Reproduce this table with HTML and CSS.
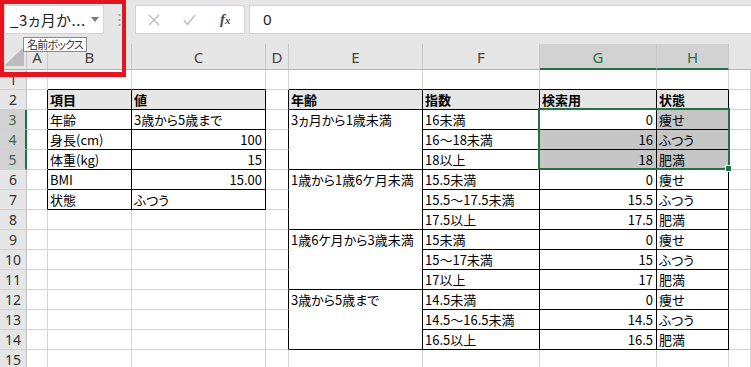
FILE: index.html
```html
<!DOCTYPE html>
<html lang="ja">
<head>
<meta charset="utf-8">
<title>Excel</title>
<link rel="stylesheet" href="styles.css">
</head>
<body>
<div class="fbar">
  <div class="namebox">
    <span class="nb-text">_3ヵ月か...</span>
    <svg class="caret" width="8" height="5" viewBox="0 0 8 5"><path d="M0 0H8L4 5Z" fill="#7a7a7a"/></svg>
  </div>
  <div class="grip">
    <svg width="3" height="12" viewBox="0 0 3 12"><rect x="0.5" y="0" width="2" height="2" fill="#a6a6a6"/><rect x="0.5" y="5" width="2" height="2" fill="#a6a6a6"/><rect x="0.5" y="10" width="2" height="2" fill="#a6a6a6"/></svg>
  </div>
  <div class="fxbox">
    <svg class="ico-x" width="12" height="12" viewBox="0 0 12 12"><path d="M1 1L11 11M11 1L1 11" stroke="#bdbdbd" stroke-width="1.4" fill="none"/></svg>
    <svg class="ico-ok" width="13" height="12" viewBox="0 0 13 12"><path d="M1 6.5L4.5 10.5L12 1" stroke="#bdbdbd" stroke-width="1.4" fill="none"/></svg>
    <span class="fx"><i>f</i><i class="fx-x">x</i></span>
  </div>
  <div class="formula">0</div>
</div>

<div class="sheet">
  <!-- header row -->
  <div class="corner"><svg width="26" height="25" viewBox="0 0 26 25"><path d="M4 22H24V3Z" fill="#bcbcbc"/></svg></div>
  <div class="ch">A</div><div class="ch">B</div><div class="ch">C</div><div class="ch">D</div><div class="ch">E</div><div class="ch">F</div><div class="ch sel">G</div><div class="ch sel">H</div><div class="ch last"></div>

  <!-- row 1 -->
  <div class="rh">1</div><div class="c"></div><div class="c kb"></div><div class="c kb"></div><div class="c"></div><div class="c kb"></div><div class="c kb"></div><div class="c kb"></div><div class="c kb"></div><div class="c"></div>
  <!-- row 2 -->
  <div class="rh">2</div><div class="c kr"></div><div class="c t th">項目</div><div class="c t th">値</div><div class="c kr"></div><div class="c t th">年齢</div><div class="c t th">指数</div><div class="c t th">検索用</div><div class="c t th">状態</div><div class="c"></div>
  <!-- row 3 -->
  <div class="rh sel">3</div><div class="c kr"></div><div class="c t">年齢</div><div class="c t">3歳から5歳まで</div><div class="c kr"></div><div class="c t m">3ヵ月から1歳未満</div><div class="c t">16未満</div><div class="c t r active">0<div class="selbox"><div class="handle"></div></div></div><div class="c t hl">痩せ</div><div class="c"></div>
  <!-- row 4 -->
  <div class="rh sel">4</div><div class="c kr"></div><div class="c t">身長(cm)</div><div class="c t r">100</div><div class="c kr"></div><div class="c t">16～18未満</div><div class="c t r hl">16</div><div class="c t hl">ふつう</div><div class="c"></div>
  <!-- row 5 -->
  <div class="rh sel">5</div><div class="c kr"></div><div class="c t">体重(kg)</div><div class="c t r">15</div><div class="c kr"></div><div class="c t">18以上</div><div class="c t r hl">18</div><div class="c t hl">肥満</div><div class="c"></div>
  <!-- row 6 -->
  <div class="rh">6</div><div class="c kr"></div><div class="c t">BMI</div><div class="c t r">15.00</div><div class="c kr"></div><div class="c t m">1歳から1歳6ケ月未満</div><div class="c t">15.5未満</div><div class="c t r">0</div><div class="c t">痩せ</div><div class="c"></div>
  <!-- row 7 -->
  <div class="rh">7</div><div class="c kr"></div><div class="c t">状態</div><div class="c t">ふつう</div><div class="c kr"></div><div class="c t">15.5～17.5未満</div><div class="c t r">15.5</div><div class="c t">ふつう</div><div class="c"></div>
  <!-- row 8 -->
  <div class="rh">8</div><div class="c"></div><div class="c"></div><div class="c"></div><div class="c kr"></div><div class="c t">17.5以上</div><div class="c t r">17.5</div><div class="c t">肥満</div><div class="c"></div>
  <!-- row 9 -->
  <div class="rh">9</div><div class="c"></div><div class="c"></div><div class="c"></div><div class="c kr"></div><div class="c t m">1歳6ケ月から3歳未満</div><div class="c t">15未満</div><div class="c t r">0</div><div class="c t">痩せ</div><div class="c"></div>
  <!-- row 10 -->
  <div class="rh">10</div><div class="c"></div><div class="c"></div><div class="c"></div><div class="c kr"></div><div class="c t">15～17未満</div><div class="c t r">15</div><div class="c t">ふつう</div><div class="c"></div>
  <!-- row 11 -->
  <div class="rh">11</div><div class="c"></div><div class="c"></div><div class="c"></div><div class="c kr"></div><div class="c t">17以上</div><div class="c t r">17</div><div class="c t">肥満</div><div class="c"></div>
  <!-- row 12 -->
  <div class="rh">12</div><div class="c"></div><div class="c"></div><div class="c"></div><div class="c kr"></div><div class="c t m">3歳から5歳まで</div><div class="c t">14.5未満</div><div class="c t r">0</div><div class="c t">痩せ</div><div class="c"></div>
  <!-- row 13 -->
  <div class="rh">13</div><div class="c"></div><div class="c"></div><div class="c"></div><div class="c kr"></div><div class="c t">14.5～16.5未満</div><div class="c t r">14.5</div><div class="c t">ふつう</div><div class="c"></div>
  <!-- row 14 -->
  <div class="rh">14</div><div class="c"></div><div class="c"></div><div class="c"></div><div class="c kr"></div><div class="c t">16.5以上</div><div class="c t r">16.5</div><div class="c t">肥満</div><div class="c"></div>
  <!-- row 15 -->
  <div class="rh">15</div><div class="c"></div><div class="c"></div><div class="c"></div><div class="c"></div><div class="c"></div><div class="c"></div><div class="c"></div><div class="c"></div><div class="c"></div>
</div>

<div class="redbox"></div>
<div class="tooltip">名前ボックス</div>
</body>
</html>
```

FILE: styles.css
```css
* { box-sizing: border-box; }
html, body { margin: 0; padding: 0; }
body {
  width: 751px;
  height: 367px;
  overflow: hidden;
  background: #fff;
  position: relative;
  font-family: "Noto Sans CJK JP", "Noto Sans", sans-serif;
  color: #000;
}

/* formula bar */
.fbar {
  height: 44px;
  background: #e6e6e6;
  display: flex;
  align-items: flex-start;
  padding: 5px 0 0 4px;
}
.namebox {
  width: 100px;
  height: 29px;
  background: #fff;
  border: 1px solid #d4d4d4;
  display: flex;
  align-items: center;
  padding-left: 5px;
  font-size: 15px;
  color: #222;
  font-family: "Noto Sans CJK JP", sans-serif;
  font-feature-settings: "palt";
}
.nb-text { flex: 1; white-space: nowrap; letter-spacing: 0.6px; }
.caret { margin-right: 4px; }
.grip {
  width: 31px;
  height: 29px;
  display: flex;
  justify-content: center;
  align-items: center;
}
.fxbox {
  width: 110px;
  height: 29px;
  background: #fff;
  border: 1px solid #d4d4d4;
  display: flex;
  align-items: center;
  padding-left: 12px;
}
.ico-ok { margin-left: 23px; }
.fx {
  margin-left: 24px;
  font-family: "Liberation Serif", serif;
  font-size: 15px;
  color: #4a4a4a;
  font-weight: bold;
}
.fx-x { font-size: 11px; }
.formula {
  margin-left: 4px;
  flex: 1;
  height: 29px;
  background: #fff;
  border: 1px solid #d4d4d4;
  border-right: none;
  padding-left: 13px;
  font-size: 15px;
  line-height: 26px;
  color: #222;
  font-family: "Noto Sans", sans-serif;
}

/* sheet grid */
.sheet {
  display: grid;
  grid-template-columns: 27px 21px 84px 134px 23px 134px 117px 117px 72px 1fr;
  grid-template-rows: 26px repeat(15, 20px);
}
.corner {
  background: #e6e6e6;
  border-right: 1px solid #c8c8c8;
  border-bottom: 1px solid #b4b4b4;
}
.corner svg { display: block; }
.ch {
  background: #e6e6e6;
  border-right: 1px solid #c8c8c8;
  border-bottom: 1px solid #b4b4b4;
  font-family: "Noto Sans", sans-serif;
  font-size: 15px;
  color: #444;
  text-align: center;
  line-height: 25px;
  padding-top: 1px;
}
.ch.last { border-right: none; }
.ch.sel {
  background: #d2d2d2;
  color: #217346;
  border-bottom: 2px solid #217346;
}
.rh {
  background: #e6e6e6;
  border-right: 1px solid #c0c0c0;
  border-bottom: 1px solid #d0d0d0;
  font-family: "Noto Sans", sans-serif;
  font-size: 14px;
  color: #333;
  text-align: center;
  line-height: 19px;
}
.rh.sel {
  background: #d2d2d2;
  color: #3d6b50;
  border-right: 2px solid #217346;
}
.c {
  border-right: 1px solid #d4d4d4;
  border-bottom: 1px solid #d4d4d4;
  font-size: 13px;
  line-height: 19px;
  padding: 0 2px;
  white-space: nowrap;
  overflow: hidden;
  font-feature-settings: "palt";
}
.c.m { grid-row: span 3; }
.c.r { text-align: right; padding-right: 3px; }
.c.t { border-right-color: #000; border-bottom-color: #000; }
.c.kb { border-bottom-color: #000; }
.c.kr { border-right-color: #000; }
.c.th { background: #e7e6e6; font-weight: bold; }
.c.hl { background: #c6c6c6; }
.c.active { position: relative; overflow: visible; }
.selbox {
  position: absolute;
  left: -2px;
  top: -2px;
  width: 192px;
  height: 62px;
  border: 2px solid #217346;
  z-index: 2;
  pointer-events: none;
}
.handle {
  position: absolute;
  right: -4px;
  bottom: -4px;
  width: 7px;
  height: 7px;
  background: #217346;
  border: 1px solid #fff;
}

/* overlays */
.redbox {
  position: absolute;
  left: 0;
  top: 0;
  width: 126px;
  height: 77px;
  border: 4px solid #e3161f;
  border-bottom-width: 5px;
  z-index: 5;
}
.tooltip {
  position: absolute;
  left: 23px;
  top: 37px;
  height: 15px;
  padding: 0 3px 0 3px;
  background: #fff;
  border: 1px solid #8a8a8a;
  font-size: 11px;
  line-height: 13px;
  letter-spacing: -0.8px;
  color: #333;
  z-index: 6;
  white-space: nowrap;
  font-feature-settings: "palt";
}
```
